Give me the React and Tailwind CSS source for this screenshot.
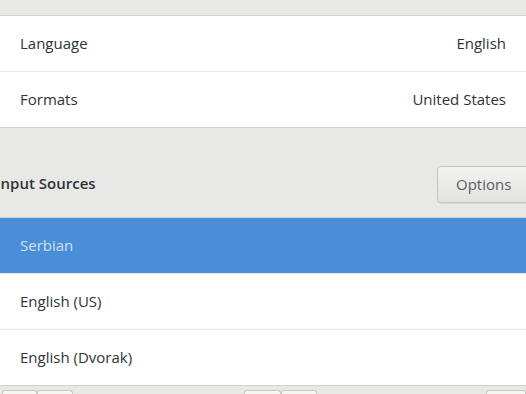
import React from "react";

const Row = ({ label, value, selected, last }) => (
  <div
    className={`flex items-center justify-between px-5 ${
      selected ? "bg-[#4a8ed8] text-[#cfe1f5]" : "bg-white text-[#2e3436]"
    } ${last ? "h-[55px]" : "h-[56px] border-b border-[#e8e8e7]"}`}
  >
    <span>{label}</span>
    {value && <span>{value}</span>}
  </div>
);

const SmallBtn = ({ w }) => (
  <div className={`h-5 ${w} rounded-t-[3px] border border-b-0 border-[#c8c8c5] bg-gradient-to-b from-[#f6f6f5] to-[#ececeb]`} />
);

export default function App() {
  return (
    <div
      className="w-[526px] h-[394px] overflow-hidden bg-[#e8e8e7] text-[15px]"
      style={{ fontFamily: '"Open Sans", "Noto Sans", sans-serif' }}
    >
      <div className="h-[15px]" />
      <div className="border-y border-[#d0d0cd] bg-white">
        <Row label="Language" value="English" />
        <Row label="Formats" value="United States" last />
      </div>

      <div className="h-[89px] flex items-end justify-between pb-[14px]">
        <span className="ml-[-4px] mb-[9px] font-semibold text-[#2e3436]">Input Sources</span>
        <div className="w-[100px] h-[37px] mr-[-11px] rounded-[4px] border border-[#c3c3c0] bg-gradient-to-b from-[#f3f3f2] to-[#e2e2e0] shadow-[0_1px_0_#d6d6d4] flex items-center pl-[18px] text-[#5a5d5e]">
          Options
        </div>
      </div>

      <div className="border-y border-[#d0d0cd] bg-white">
        <Row label="Serbian" selected />
        <Row label="English (US)" />
        <Row label="English (Dvorak)" last />
      </div>

      <div className="flex pt-[4px]">
        <div className="flex ml-[2px]">
          <SmallBtn w="w-[35px]" />
          <SmallBtn w="w-[36px]" />
        </div>
        <div className="flex ml-[171px]">
          <SmallBtn w="w-[37px]" />
          <SmallBtn w="w-[36px]" />
        </div>
        <div className="ml-auto">
          <SmallBtn w="w-[40px]" />
        </div>
      </div>
    </div>
  );
}
